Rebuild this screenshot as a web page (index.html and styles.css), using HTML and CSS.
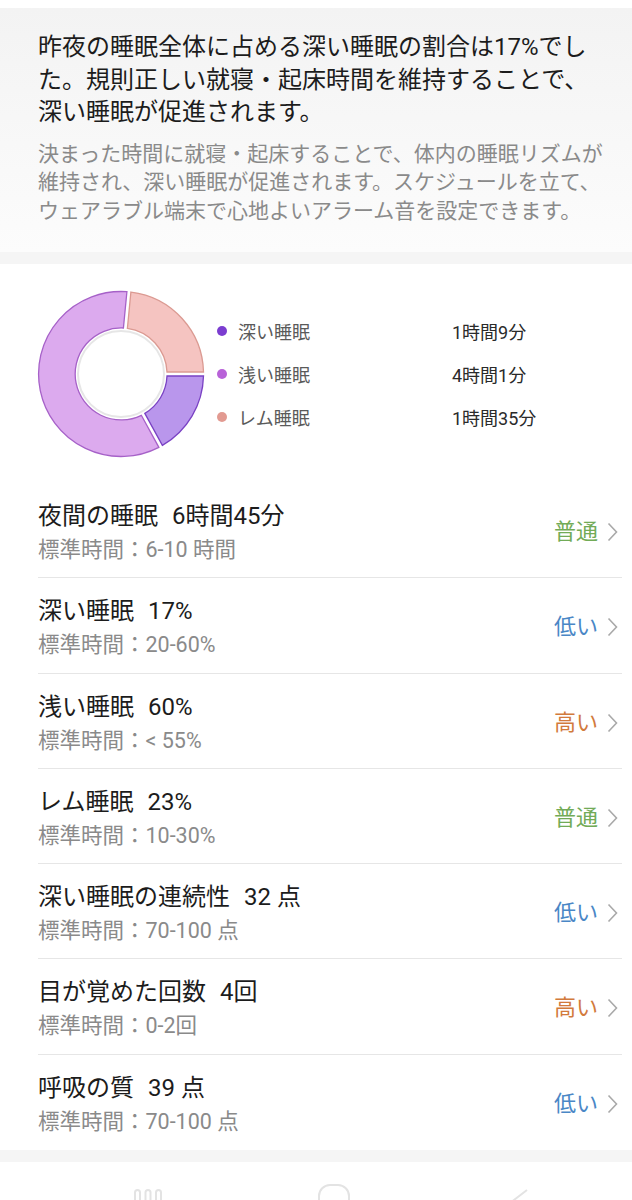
FILE: index.html
```html
<!DOCTYPE html>
<html lang="ja">
<head>
<meta charset="utf-8">
<title>睡眠</title>
<link rel="stylesheet" href="styles.css">
</head>
<body>
<div class="page">
  <section class="advice">
    <h1 class="advice-title">昨夜の睡眠全体に占める深い睡眠の割合は17%でした。規則正しい就寝・起床時間を維持することで、深い睡眠が促進されます。</h1>
    <p class="advice-text">決まった時間に就寝・起床することで、体内の睡眠リズムが維持され、深い睡眠が促進されます。スケジュールを立て、ウェアラブル端末で心地よいアラーム音を設定できます。</p>
  </section>
  <div class="band"></div>
  <section class="card">
    <div class="chart">
      <svg class="donut" width="168" height="168" viewBox="0 0 168 168">
        <circle cx="84" cy="84" r="43" fill="#fff" stroke="#e6e6e6" stroke-width="2"/>
        <path class="seg-rem" d="M 93.89 2.07 A 82.5 82.5 0 0 1 166.5 82 L 130 82 A 46 46 0 0 0 90.40 38.40 Z"/>
        <path class="seg-deep" d="M 166.5 86 A 82.5 82.5 0 0 1 125.37 155.40 L 107.84 123.39 A 46 46 0 0 0 130 86 Z"/>
        <path class="seg-light" d="M 121.87 157.32 A 82.5 82.5 0 1 1 89.91 1.69 L 86.42 38.02 A 46 46 0 1 0 104.34 125.31 Z"/>
      </svg>
      <ul class="legend">
        <li class="legend-row"><span class="dot dot-deep"></span><span class="legend-name">深い睡眠</span><span class="legend-value">1時間9分</span></li>
        <li class="legend-row"><span class="dot dot-light"></span><span class="legend-name">浅い睡眠</span><span class="legend-value">4時間1分</span></li>
        <li class="legend-row"><span class="dot dot-rem"></span><span class="legend-name">レム睡眠</span><span class="legend-value">1時間35分</span></li>
      </ul>
    </div>
    <ul class="metrics">
      <li class="metric">
        <div class="metric-main">
          <div class="metric-title">夜間の睡眠 <span class="metric-value">6時間45分</span></div>
          <div class="metric-sub">標準時間：6-10 時間</div>
        </div>
        <span class="status normal">普通</span>
        <svg class="chev" width="11" height="20" viewBox="0 0 11 20"><path d="M1.5 1.5 L9.5 10 L1.5 18.5"/></svg>
      </li>
      <li class="metric">
        <div class="metric-main">
          <div class="metric-title">深い睡眠 <span class="metric-value">17%</span></div>
          <div class="metric-sub">標準時間：20-60%</div>
        </div>
        <span class="status low">低い</span>
        <svg class="chev" width="11" height="20" viewBox="0 0 11 20"><path d="M1.5 1.5 L9.5 10 L1.5 18.5"/></svg>
      </li>
      <li class="metric">
        <div class="metric-main">
          <div class="metric-title">浅い睡眠 <span class="metric-value">60%</span></div>
          <div class="metric-sub">標準時間：&lt; 55%</div>
        </div>
        <span class="status high">高い</span>
        <svg class="chev" width="11" height="20" viewBox="0 0 11 20"><path d="M1.5 1.5 L9.5 10 L1.5 18.5"/></svg>
      </li>
      <li class="metric">
        <div class="metric-main">
          <div class="metric-title">レム睡眠 <span class="metric-value">23%</span></div>
          <div class="metric-sub">標準時間：10-30%</div>
        </div>
        <span class="status normal">普通</span>
        <svg class="chev" width="11" height="20" viewBox="0 0 11 20"><path d="M1.5 1.5 L9.5 10 L1.5 18.5"/></svg>
      </li>
      <li class="metric">
        <div class="metric-main">
          <div class="metric-title">深い睡眠の連続性 <span class="metric-value">32 点</span></div>
          <div class="metric-sub">標準時間：70-100 点</div>
        </div>
        <span class="status low">低い</span>
        <svg class="chev" width="11" height="20" viewBox="0 0 11 20"><path d="M1.5 1.5 L9.5 10 L1.5 18.5"/></svg>
      </li>
      <li class="metric">
        <div class="metric-main">
          <div class="metric-title">目が覚めた回数 <span class="metric-value">4回</span></div>
          <div class="metric-sub">標準時間：0-2回</div>
        </div>
        <span class="status high">高い</span>
        <svg class="chev" width="11" height="20" viewBox="0 0 11 20"><path d="M1.5 1.5 L9.5 10 L1.5 18.5"/></svg>
      </li>
      <li class="metric">
        <div class="metric-main">
          <div class="metric-title">呼吸の質 <span class="metric-value">39 点</span></div>
          <div class="metric-sub">標準時間：70-100 点</div>
        </div>
        <span class="status low">低い</span>
        <svg class="chev" width="11" height="20" viewBox="0 0 11 20"><path d="M1.5 1.5 L9.5 10 L1.5 18.5"/></svg>
      </li>
    </ul>
  </section>
  <div class="band"></div>
  <nav class="navbar">
    <svg class="nav-recent" width="30" height="22" viewBox="0 0 30 22">
      <rect x="2" y="1" width="5" height="20" rx="2.5"/>
      <rect x="12.5" y="1" width="5" height="20" rx="2.5"/>
      <rect x="23" y="1" width="5" height="20" rx="2.5"/>
    </svg>
    <svg class="nav-home" width="32" height="32" viewBox="0 0 32 32">
      <rect x="1" y="1" width="30" height="30" rx="11"/>
    </svg>
    <svg class="nav-back" width="20" height="22" viewBox="0 0 20 22">
      <path d="M17 1 L4 11 L17 21"/>
    </svg>
  </nav>
</div>
</body>
</html>
```

FILE: styles.css
```css
* {
  box-sizing: border-box;
}

html, body {
  margin: 0;
  padding: 0;
  background: #ffffff;
}

body {
  font-family: Roboto, "Noto Sans CJK JP", "Noto Sans", sans-serif;
  color: #1c1c1c;
}

.page {
  width: 632px;
  padding-top: 8px;
}

.advice {
  background: linear-gradient(#f3f3f3, #fcfcfc);
  padding: 23px 19px 27px 38px;
}

.advice-title {
  margin: 0;
  padding-right: 15px;
  font-size: 24px;
  line-height: 32.5px;
  font-weight: 400;
  color: #1c1c1c;
}

.advice-text {
  margin: 11px 0 0;
  font-size: 21px;
  line-height: 28.5px;
  color: #8a8a8a;
}

.band {
  height: 12px;
  background: #f5f5f5;
}

.card {
  background: #ffffff;
}

.chart {
  display: flex;
  align-items: center;
  padding: 26px 0 25px 37px;
}

.donut {
  display: block;
  flex: none;
}

.seg-rem {
  fill: #f5c4c1;
  stroke: #db9a92;
  stroke-width: 1.3;
}

.seg-deep {
  fill: #b996ec;
  stroke: #7a42c4;
  stroke-width: 1.3;
}

.seg-light {
  fill: #dcaaee;
  stroke: #a661c8;
  stroke-width: 1.3;
}

.legend {
  list-style: none;
  margin: 0 0 0 12px;
  padding: 0;
}

.legend-row {
  display: flex;
  align-items: center;
  height: 43px;
}

.dot {
  width: 10px;
  height: 10px;
  border-radius: 50%;
  flex: none;
}

.dot-deep { background: #7b3dd0; }
.dot-light { background: #b862d8; }
.dot-rem { background: #e29a91; }

.legend-name {
  width: 214px;
  margin-left: 11px;
  font-size: 18px;
  color: #5a5a5a;
}

.legend-value {
  font-size: 18px;
  color: #2a2a2a;
}

.metrics {
  list-style: none;
  margin: 0;
  padding: 0;
}

.metric {
  display: flex;
  align-items: center;
  margin: 0 10px 0 38px;
  padding: 18px 0 14.3px;
  border-bottom: 1px solid #e6e6e6;
}

.metric:last-child {
  border-bottom: none;
  padding-bottom: 15.5px;
}

.metric-main {
  flex: 1;
}

.metric-title {
  font-size: 24px;
  line-height: 30px;
  color: #1c1c1c;
}

.metric-value {
  margin-left: 8px;
}

.metric-sub {
  margin-top: 6px;
  font-size: 21.5px;
  line-height: 26px;
  color: #8a8a8a;
}

.status {
  font-size: 22px;
  line-height: 30px;
}

.status.normal { color: #72ab57; }
.status.low { color: #4a87c6; }
.status.high { color: #d27a3c; }

.chev {
  display: block;
  margin-left: 9px;
  margin-right: 4px;
  fill: none;
  stroke: #a9a9a9;
  stroke-width: 1.6;
}

.navbar {
  display: flex;
  align-items: center;
  height: 76px;
  padding-left: 133px;
}

.nav-recent rect,
.nav-home rect,
.nav-back path {
  fill: none;
  stroke: #e3e3e3;
  stroke-width: 2;
}

.nav-home {
  margin-left: 155px;
}

.nav-back {
  margin-left: 160px;
}
```
